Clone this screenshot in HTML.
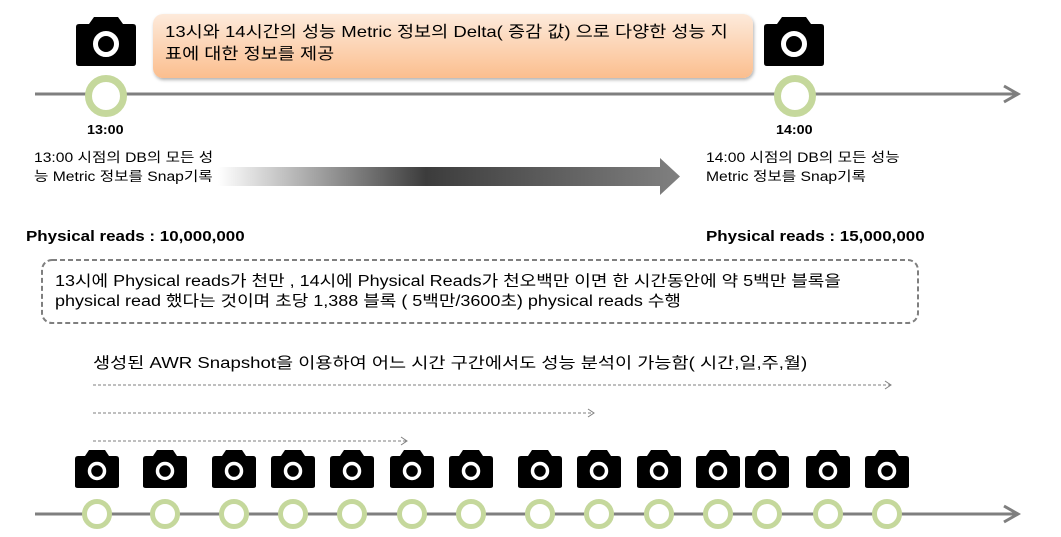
<!DOCTYPE html>
<html><head><meta charset="utf-8"><style>
html,body{margin:0;padding:0;background:#fff;}
body{width:1061px;height:537px;position:relative;overflow:hidden;font-family:"Liberation Sans","Noto Sans CJK KR",sans-serif;color:#000;}
.t{position:absolute;white-space:nowrap;transform-origin:0 0;}
svg{position:absolute;left:0;top:0;}
</style></head><body>
<svg width="1061" height="537" viewBox="0 0 1061 537">
<defs>
<linearGradient id="og" x1="0" y1="0" x2="0" y2="1"><stop offset="0" stop-color="#fdeadb"/><stop offset="1" stop-color="#fbbe8e"/></linearGradient>
<linearGradient id="ag" x1="218" y1="0" x2="680" y2="0" gradientUnits="userSpaceOnUse"><stop offset="0" stop-color="#ffffff"/><stop offset="0.45" stop-color="#3c3c3c"/><stop offset="1" stop-color="#808080"/></linearGradient>
<filter id="sh" x="-5%" y="-20%" width="110%" height="150%"><feDropShadow dx="1" dy="2" stdDeviation="1.5" flood-color="#000" flood-opacity="0.3"/></filter>
<g id="cam"><path d="M-30,-16 Q-30,-19 -27,-19 L-17,-19 L-12,-26 L12,-26 L17,-19 L27,-19 Q30,-19 30,-16 L30,20 Q30,23 27,23 L-27,23 Q-30,23 -30,20 Z" fill="#000"/><circle cx="0" cy="1" r="10.5" fill="none" stroke="#fff" stroke-width="5"/></g>
<g id="scam"><path d="M-22,-11 Q-22,-14 -19,-14 L-12,-14 L-8,-20 L8,-20 L12,-14 L19,-14 Q22,-14 22,-11 L22,16 Q22,18 19,18 L-19,18 Q-22,18 -22,16 Z" fill="#000"/><circle cx="0" cy="1" r="7.5" fill="none" stroke="#fff" stroke-width="3.5"/></g>
</defs>
<rect x="153" y="14" width="600" height="64" rx="10" fill="url(#og)" filter="url(#sh)"/>
<line x1="35" y1="94" x2="1016" y2="94" stroke="#7f7f7f" stroke-width="3"/>
<polyline points="1004,86 1018,94 1004,102" fill="none" stroke="#7f7f7f" stroke-width="3"/>
<use href="#cam" x="106" y="43"/>
<use href="#cam" x="794" y="43"/>
<circle cx="106" cy="96" r="17.5" fill="#fff" stroke="#c5d89c" stroke-width="7"/>
<circle cx="795" cy="96" r="17.5" fill="#fff" stroke="#c5d89c" stroke-width="7"/>
<path d="M218,167 L660,167 L660,158 L680,176.5 L660,195 L660,186 L218,186 Z" fill="url(#ag)"/>
<rect x="42" y="260" width="876" height="63" rx="10" fill="none" stroke="#7f7f7f" stroke-width="2" stroke-dasharray="5,3"/>
<g stroke="#7f7f7f" stroke-width="1" stroke-dasharray="3,2" fill="none">
<line x1="93" y1="385" x2="890" y2="385"/><line x1="93" y1="413" x2="593" y2="413"/><line x1="93" y1="441" x2="406" y2="441"/>
</g>
<g stroke="#7f7f7f" stroke-width="1" fill="none"><polyline points="885,381 891,385 885,389"/><polyline points="588,409 594,413 588,417"/><polyline points="401,437 407,441 401,445"/></g>
<line x1="35" y1="514" x2="1016" y2="514" stroke="#7f7f7f" stroke-width="3"/>
<polyline points="1004,506 1018,514 1004,522" fill="none" stroke="#7f7f7f" stroke-width="3"/>
<g>
<use href="#scam" x="97" y="470"/><use href="#scam" x="165" y="470"/><use href="#scam" x="234" y="470"/><use href="#scam" x="293" y="470"/><use href="#scam" x="352" y="470"/><use href="#scam" x="412" y="470"/><use href="#scam" x="471" y="470"/><use href="#scam" x="540" y="470"/><use href="#scam" x="599" y="470"/><use href="#scam" x="659" y="470"/><use href="#scam" x="718" y="470"/><use href="#scam" x="767" y="470"/><use href="#scam" x="828" y="470"/><use href="#scam" x="887" y="470"/>
</g>
<g fill="#fff" stroke="#c5d89c" stroke-width="5">
<circle cx="97" cy="514" r="12.5"/><circle cx="165" cy="514" r="12.5"/><circle cx="234" cy="514" r="12.5"/><circle cx="293" cy="514" r="12.5"/><circle cx="352" cy="514" r="12.5"/><circle cx="412" cy="514" r="12.5"/><circle cx="471" cy="514" r="12.5"/><circle cx="540" cy="514" r="12.5"/><circle cx="599" cy="514" r="12.5"/><circle cx="659" cy="514" r="12.5"/><circle cx="718" cy="514" r="12.5"/><circle cx="767" cy="514" r="12.5"/><circle cx="828" cy="514" r="12.5"/><circle cx="887" cy="514" r="12.5"/>
</g>
</svg>
<div class="t" style="left:165px;top:22px;font-size:16px;line-height:22px;transform:scaleX(1.16);">13시와 14시간의 성능 Metric 정보의 Delta( 증감 값) 으로 다양한 성능 지<br>표에 대한 정보를 제공</div>
<div class="t" style="left:87px;top:122px;font-size:13px;font-weight:bold;transform:scaleX(1.1);">13:00</div>
<div class="t" style="left:776px;top:122px;font-size:13px;font-weight:bold;transform:scaleX(1.1);">14:00</div>
<div class="t" style="left:34px;top:148px;font-size:13.5px;line-height:19px;transform:scaleX(1.16);">13:00 시점의 DB의 모든 성<br>능 Metric 정보를 Snap기록</div>
<div class="t" style="left:706px;top:148px;font-size:13.5px;line-height:19px;transform:scaleX(1.16);">14:00 시점의 DB의 모든 성능<br>Metric 정보를 Snap기록</div>
<div class="t" style="left:26px;top:228px;font-size:15px;font-weight:bold;transform:scaleX(1.13);">Physical reads : 10,000,000</div>
<div class="t" style="left:706px;top:228px;font-size:15px;font-weight:bold;transform:scaleX(1.13);">Physical reads : 15,000,000</div>
<div class="t" style="left:55px;top:272px;font-size:15.5px;line-height:20px;transform:scaleX(1.16);">13시에 Physical reads가 천만 , 14시에 Physical Reads가 천오백만 이면 한 시간동안에 약 5백만 블록을<br>physical read 했다는 것이며 초당 1,388 블록 ( 5백만/3600초) physical reads 수행</div>
<div class="t" style="left:93px;top:351px;font-size:15.5px;transform:scaleX(1.2);">생성된 AWR Snapshot을 이용하여 어느 시간 구간에서도 성능 분석이 가능함( 시간,일,주,월)</div>
</body></html>
